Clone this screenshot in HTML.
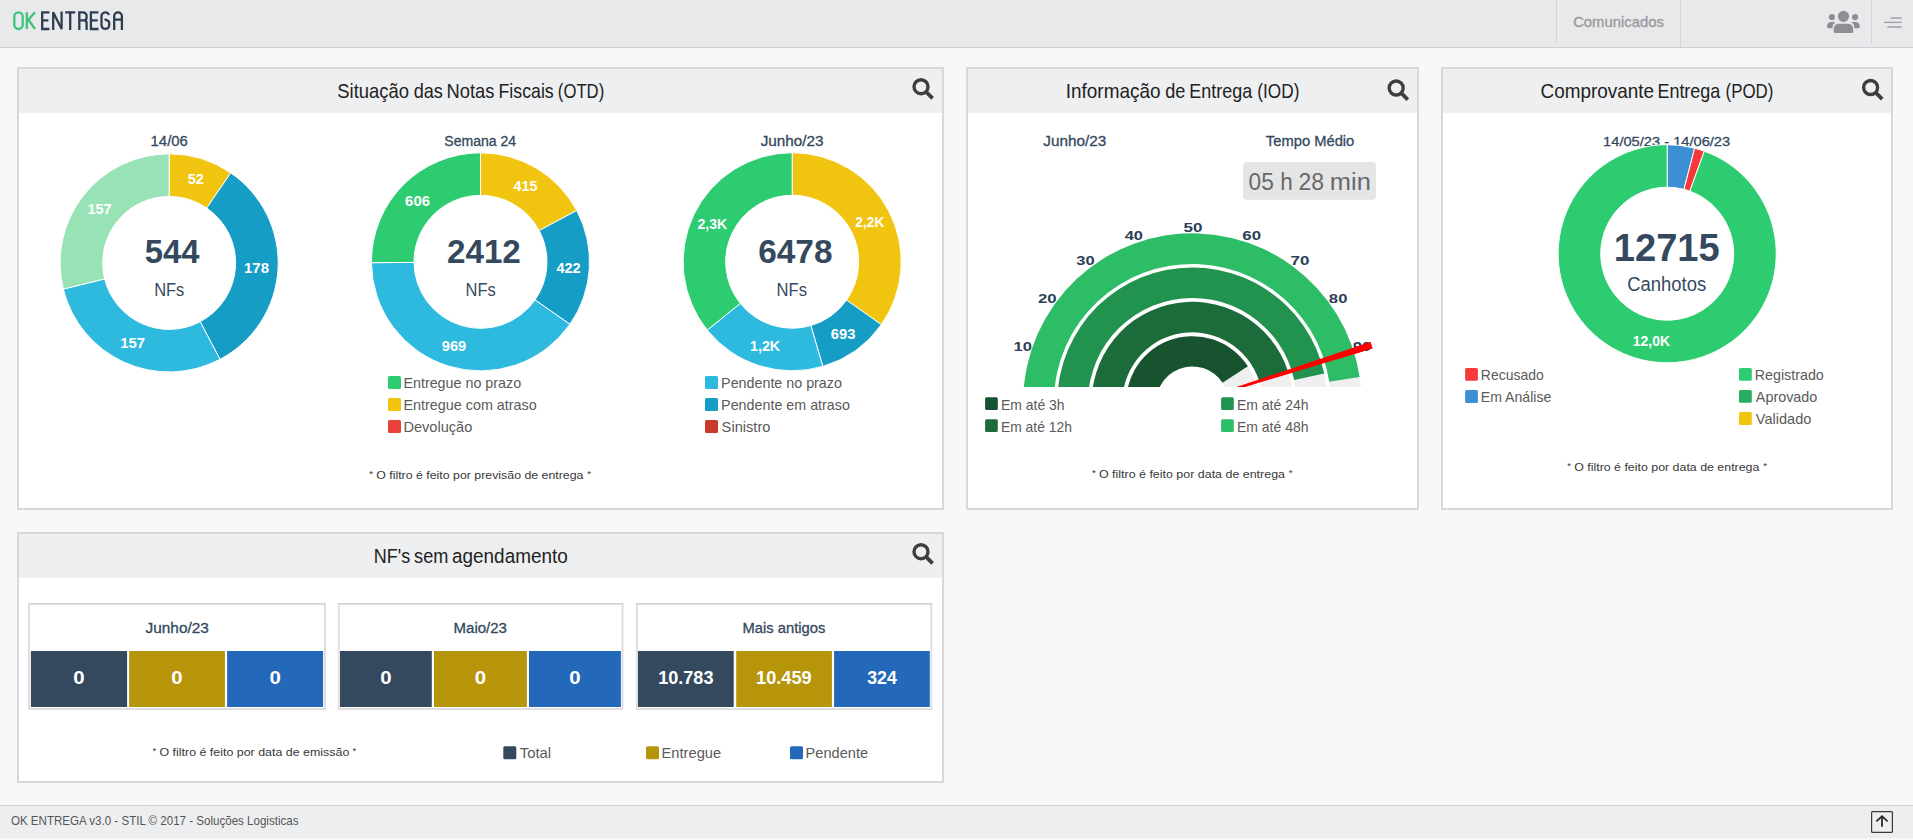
<!DOCTYPE html><html><head><meta charset="utf-8"><style>html,body{margin:0;padding:0;width:1913px;height:840px;overflow:hidden;background:#f7f8fa} svg{position:absolute;left:0;top:0;display:block} text{font-family:"Liberation Sans",sans-serif}</style></head><body>
<svg width="1913" height="840" viewBox="0 0 1913 840">
<rect x="0" y="0" width="1913" height="840" fill="#f7f8fa"/>
<rect x="0" y="0" width="1913" height="47" fill="#e8e9eb"/>
<rect x="0" y="47" width="1913" height="1" fill="#cfd0d3"/>
<rect x="1556" y="0" width="1" height="44" fill="#d3d4d7"/>
<rect x="1680" y="0" width="1" height="47" fill="#d3d4d7"/>
<rect x="1871" y="0" width="1" height="44" fill="#d3d4d7"/>
<path d="M14.3,16.5 A4.2,4.2 0 0 1 22.7,16.5 L22.7,24.8 A4.2,4.2 0 0 1 14.3,24.8 Z" fill="none" stroke="#3ec37a" stroke-width="2.3" stroke-linecap="round" stroke-linejoin="round"/>
<path d="M26.8,12.3 L26.8,29.0" fill="none" stroke="#3ec37a" stroke-width="2.3" stroke-linecap="butt" stroke-linejoin="round"/>
<path d="M34.9,12.3 L27.2,21.2 M28.6,19.9 L35.0,29.0" fill="none" stroke="#3ec37a" stroke-width="2.3" stroke-linecap="butt" stroke-linejoin="round"/>
<path d="M49.4,12.3 L42.2,12.3 L42.2,29.0 L49.4,29.0 M42.2,20.3 L48.4,20.3" fill="none" stroke="#2e3e50" stroke-width="2.3" stroke-linecap="butt" stroke-linejoin="miter"/>
<path d="M53.2,29.9 L53.2,12.3 L61.6,29.0 L61.6,11.4" fill="none" stroke="#2e3e50" stroke-width="2.3" stroke-linecap="butt" stroke-linejoin="miter"/>
<path d="M65.2,12.3 L75.3,12.3 M70.2,12.3 L70.2,29.9" fill="none" stroke="#2e3e50" stroke-width="2.3" stroke-linecap="butt" stroke-linejoin="miter"/>
<path d="M79.3,29.9 L79.3,12.3 L83.0,12.3 A3.6,3.6 0 0 1 86.6,15.9 L86.6,17.6 Q86.6,20.3 84.0,20.3 L79.3,20.3 M84.0,20.3 Q86.6,20.3 86.6,23.0 L86.6,29.9" fill="none" stroke="#2e3e50" stroke-width="2.3" stroke-linecap="butt" stroke-linejoin="miter"/>
<path d="M98.5,12.3 L90.9,12.3 L90.9,29.0 L98.5,29.0 M90.9,20.3 L97.8,20.3" fill="none" stroke="#2e3e50" stroke-width="2.3" stroke-linecap="butt" stroke-linejoin="miter"/>
<path d="M108.6,14.15 A3.85,3.85 0 0 0 101.5,16.2 L101.5,25.1 A3.85,3.85 0 0 0 109.2,25.1 L109.2,22.8 Q109.2,20.6 105.4,19.6" fill="none" stroke="#2e3e50" stroke-width="2.3" stroke-linecap="round" stroke-linejoin="round"/>
<path d="M114.2,29.9 L114.2,16.2 A3.85,3.85 0 0 1 121.9,16.2 L121.9,29.9 M114.2,19.7 L121.9,19.7" fill="none" stroke="#2e3e50" stroke-width="2.3" stroke-linecap="butt" stroke-linejoin="miter"/>
<text x="1573.16" y="27.10" font-size="15.42" fill="#9a9a9c" stroke="#9a9a9c" stroke-width="0.35" textLength="90.65" lengthAdjust="spacingAndGlyphs">Comunicados</text>
<circle cx="1843.5" cy="16.3" r="5.6" fill="#8e8e93"/>
<circle cx="1831.9" cy="17.1" r="3.1" fill="#8e8e93"/>
<circle cx="1855.1" cy="17.1" r="3.1" fill="#8e8e93"/>
<path d="M1833.6,31.5 L1833.6,29.5 Q1833.6,23.8 1839.5,23.8 L1847.3,23.8 Q1853.2,23.8 1853.2,29.5 L1853.2,31.5 Q1853.2,33 1851.7,33 L1835.1,33 Q1833.6,33 1833.6,31.5 Z" fill="#8e8e93"/>
<path d="M1827,27 Q1827,22.1 1831.5,22.1 L1835.4,22.1 Q1832.6,24.2 1832.4,28.3 L1828.5,28.3 Q1827,28.3 1827,27 Z" fill="#8e8e93"/>
<path d="M1859.8,27 Q1859.8,22.1 1855.3,22.1 L1851.4,22.1 Q1854.2,24.2 1854.4,28.3 L1858.3,28.3 Q1859.8,28.3 1859.8,27 Z" fill="#8e8e93"/>
<rect x="1890.7" y="17.3" width="11" height="1.5" fill="#a4a4a8"/>
<rect x="1883.8" y="21.7" width="17.9" height="1.4" fill="#a4a4a8"/>
<rect x="1887.4" y="26.2" width="14.3" height="1.6" fill="#a4a4a8"/>
<rect x="17" y="67" width="927" height="443" fill="#d8d8da"/>
<rect x="19" y="69" width="923" height="439" fill="#fff"/>
<rect x="19" y="69" width="923" height="44" fill="#eeeff1"/>
<rect x="966" y="67" width="453" height="443" fill="#d8d8da"/>
<rect x="968" y="69" width="449" height="439" fill="#fff"/>
<rect x="968" y="69" width="449" height="44" fill="#eeeff1"/>
<rect x="1441" y="67" width="452" height="443" fill="#d8d8da"/>
<rect x="1443" y="69" width="448" height="439" fill="#fff"/>
<rect x="1443" y="69" width="448" height="44" fill="#eeeff1"/>
<rect x="17" y="532" width="927" height="251" fill="#d8d8da"/>
<rect x="19" y="534" width="923" height="247" fill="#fff"/>
<rect x="19" y="534" width="923" height="44" fill="#eeeff1"/>
<circle cx="921" cy="86.7" r="7.0" fill="none" stroke="#3e3e40" stroke-width="3.35"/>
<line x1="925.6" y1="91.3" x2="932.6" y2="98.3" stroke="#3e3e40" stroke-width="3.8"/>
<circle cx="1396.2" cy="88" r="7.0" fill="none" stroke="#3e3e40" stroke-width="3.35"/>
<line x1="1400.8" y1="92.6" x2="1407.8" y2="99.6" stroke="#3e3e40" stroke-width="3.8"/>
<circle cx="1870.6" cy="87.5" r="7.0" fill="none" stroke="#3e3e40" stroke-width="3.35"/>
<line x1="1875.1999999999998" y1="92.1" x2="1882.1999999999998" y2="99.1" stroke="#3e3e40" stroke-width="3.8"/>
<circle cx="921" cy="551.7" r="7.0" fill="none" stroke="#3e3e40" stroke-width="3.35"/>
<line x1="925.6" y1="556.3000000000001" x2="932.6" y2="563.3000000000001" stroke="#3e3e40" stroke-width="3.8"/>
<text x="337.27" y="98.20" font-size="19.35" fill="#222" textLength="71.70" lengthAdjust="spacingAndGlyphs">Situação</text>
<text x="413.63" y="98.20" font-size="19.35" fill="#222" textLength="29.20" lengthAdjust="spacingAndGlyphs">das</text>
<text x="446.59" y="98.20" font-size="19.35" fill="#222" textLength="47.85" lengthAdjust="spacingAndGlyphs">Notas</text>
<text x="498.54" y="98.20" font-size="19.35" fill="#222" textLength="55.16" lengthAdjust="spacingAndGlyphs">Fiscais</text>
<text x="557.86" y="98.20" font-size="19.35" fill="#222" textLength="46.33" lengthAdjust="spacingAndGlyphs">(OTD)</text>
<text x="1065.75" y="98.00" font-size="19.35" fill="#222" textLength="94.71" lengthAdjust="spacingAndGlyphs">Informação</text>
<text x="1165.23" y="98.00" font-size="19.35" fill="#222" textLength="20.18" lengthAdjust="spacingAndGlyphs">de</text>
<text x="1189.32" y="98.00" font-size="19.35" fill="#222" textLength="62.84" lengthAdjust="spacingAndGlyphs">Entrega</text>
<text x="1257.33" y="98.00" font-size="19.35" fill="#222" textLength="42.03" lengthAdjust="spacingAndGlyphs">(IOD)</text>
<text x="1540.55" y="97.80" font-size="19.35" fill="#222" textLength="113.56" lengthAdjust="spacingAndGlyphs">Comprovante</text>
<text x="1657.42" y="97.80" font-size="19.35" fill="#222" textLength="62.94" lengthAdjust="spacingAndGlyphs">Entrega</text>
<text x="1725.55" y="97.80" font-size="19.35" fill="#222" textLength="47.77" lengthAdjust="spacingAndGlyphs">(POD)</text>
<text x="373.82" y="563.20" font-size="19.49" fill="#222" textLength="36.39" lengthAdjust="spacingAndGlyphs">NF's</text>
<text x="414.10" y="563.20" font-size="19.49" fill="#222" textLength="34.31" lengthAdjust="spacingAndGlyphs">sem</text>
<text x="452.00" y="563.20" font-size="19.49" fill="#222" textLength="115.79" lengthAdjust="spacingAndGlyphs">agendamento</text>
<text x="150.58" y="145.90" font-size="14.84" fill="#34495e" stroke="#34495e" stroke-width="0.3" textLength="37.25" lengthAdjust="spacingAndGlyphs">14/06</text>
<text x="444.27" y="145.90" font-size="14.55" fill="#34495e" stroke="#34495e" stroke-width="0.3" textLength="71.85" lengthAdjust="spacingAndGlyphs">Semana 24</text>
<text x="760.67" y="145.90" font-size="14.55" fill="#34495e" stroke="#34495e" stroke-width="0.3" textLength="62.92" lengthAdjust="spacingAndGlyphs">Junho/23</text>
<path d="M169.15,153.85 A109.05,109.05 0 0 1 230.78,172.93 L206.73,208.04 A66.5,66.5 0 0 0 169.15,196.40 Z" fill="#f1c40f" stroke="#fff" stroke-width="1" stroke-linejoin="round"/>
<path d="M230.78,172.93 A109.05,109.05 0 0 1 220.01,359.36 L200.16,321.72 A66.5,66.5 0 0 0 206.73,208.04 Z" fill="#169dc6" stroke="#fff" stroke-width="1" stroke-linejoin="round"/>
<path d="M220.01,359.36 A109.05,109.05 0 0 1 63.29,289.10 L104.60,278.88 A66.5,66.5 0 0 0 200.16,321.72 Z" fill="#2eb9df" stroke="#fff" stroke-width="1" stroke-linejoin="round"/>
<path d="M63.29,289.10 A109.05,109.05 0 0 1 169.15,153.85 L169.15,196.40 A66.5,66.5 0 0 0 104.60,278.88 Z" fill="#98e3b5" stroke="#fff" stroke-width="1" stroke-linejoin="round"/>
<path d="M480.50,152.80 A109.05,109.05 0 0 1 576.73,210.55 L539.18,230.57 A66.5,66.5 0 0 0 480.50,195.35 Z" fill="#f1c40f" stroke="#fff" stroke-width="1" stroke-linejoin="round"/>
<path d="M576.73,210.55 A109.05,109.05 0 0 1 569.90,324.29 L535.02,299.93 A66.5,66.5 0 0 0 539.18,230.57 Z" fill="#169dc6" stroke="#fff" stroke-width="1" stroke-linejoin="round"/>
<path d="M569.90,324.29 A109.05,109.05 0 0 1 371.45,262.69 L414.00,262.36 A66.5,66.5 0 0 0 535.02,299.93 Z" fill="#2eb9df" stroke="#fff" stroke-width="1" stroke-linejoin="round"/>
<path d="M371.45,262.69 A109.05,109.05 0 0 1 480.50,152.80 L480.50,195.35 A66.5,66.5 0 0 0 414.00,262.36 Z" fill="#2ecc71" stroke="#fff" stroke-width="1" stroke-linejoin="round"/>
<path d="M792.20,152.70 A109.05,109.05 0 0 1 881.31,324.61 L846.54,300.08 A66.5,66.5 0 0 0 792.20,195.25 Z" fill="#f1c40f" stroke="#fff" stroke-width="1" stroke-linejoin="round"/>
<path d="M881.31,324.61 A109.05,109.05 0 0 1 822.81,366.42 L810.86,325.58 A66.5,66.5 0 0 0 846.54,300.08 Z" fill="#169dc6" stroke="#fff" stroke-width="1" stroke-linejoin="round"/>
<path d="M822.81,366.42 A109.05,109.05 0 0 1 707.21,330.08 L740.37,303.42 A66.5,66.5 0 0 0 810.86,325.58 Z" fill="#2eb9df" stroke="#fff" stroke-width="1" stroke-linejoin="round"/>
<path d="M707.21,330.08 A109.05,109.05 0 0 1 792.20,152.70 L792.20,195.25 A66.5,66.5 0 0 0 740.37,303.42 Z" fill="#2ecc71" stroke="#fff" stroke-width="1" stroke-linejoin="round"/>
<text x="187.77" y="183.90" font-size="14.55" font-weight="bold" fill="#ffffff" textLength="16.00" lengthAdjust="spacingAndGlyphs">52</text>
<text x="244.07" y="273.30" font-size="14.55" font-weight="bold" fill="#ffffff" textLength="24.90" lengthAdjust="spacingAndGlyphs">178</text>
<text x="120.17" y="348.20" font-size="14.55" font-weight="bold" fill="#ffffff" textLength="24.77" lengthAdjust="spacingAndGlyphs">157</text>
<text x="87.40" y="214.20" font-size="14.55" font-weight="bold" fill="#ffffff" textLength="24.03" lengthAdjust="spacingAndGlyphs">157</text>
<text x="513.48" y="191.40" font-size="14.55" font-weight="bold" fill="#ffffff" textLength="24.03" lengthAdjust="spacingAndGlyphs">415</text>
<text x="405.14" y="206.30" font-size="14.55" font-weight="bold" fill="#ffffff" textLength="24.79" lengthAdjust="spacingAndGlyphs">606</text>
<text x="556.38" y="273.10" font-size="14.55" font-weight="bold" fill="#ffffff" textLength="24.18" lengthAdjust="spacingAndGlyphs">422</text>
<text x="441.79" y="350.90" font-size="14.55" font-weight="bold" fill="#ffffff" textLength="24.44" lengthAdjust="spacingAndGlyphs">969</text>
<text x="855.22" y="227.40" font-size="14.55" font-weight="bold" fill="#ffffff" textLength="29.22" lengthAdjust="spacingAndGlyphs">2,2K</text>
<text x="697.51" y="228.80" font-size="14.55" font-weight="bold" fill="#ffffff" textLength="29.73" lengthAdjust="spacingAndGlyphs">2,3K</text>
<text x="830.85" y="339.10" font-size="14.55" font-weight="bold" fill="#ffffff" textLength="24.58" lengthAdjust="spacingAndGlyphs">693</text>
<text x="750.01" y="350.60" font-size="14.55" font-weight="bold" fill="#ffffff" textLength="30.13" lengthAdjust="spacingAndGlyphs">1,2K</text>
<text x="144.72" y="263.10" font-size="33.89" font-weight="bold" fill="#34495e" textLength="54.78" lengthAdjust="spacingAndGlyphs">544</text>
<text x="446.94" y="263.10" font-size="33.89" font-weight="bold" fill="#34495e" textLength="73.88" lengthAdjust="spacingAndGlyphs">2412</text>
<text x="758.25" y="263.10" font-size="33.89" font-weight="bold" fill="#34495e" textLength="74.23" lengthAdjust="spacingAndGlyphs">6478</text>
<text x="154.14" y="295.70" font-size="18.04" fill="#34495e" textLength="30.25" lengthAdjust="spacingAndGlyphs">NFs</text>
<text x="465.54" y="295.70" font-size="18.04" fill="#34495e" textLength="30.25" lengthAdjust="spacingAndGlyphs">NFs</text>
<text x="776.53" y="295.70" font-size="18.04" fill="#34495e" textLength="30.46" lengthAdjust="spacingAndGlyphs">NFs</text>
<rect x="388" y="376" width="13" height="13" rx="1.5" fill="#2ecc71"/>
<text x="403.42" y="387.90" font-size="14.40" fill="#5a5a5a" textLength="117.76" lengthAdjust="spacingAndGlyphs">Entregue no prazo</text>
<rect x="388" y="398" width="13" height="13" rx="1.5" fill="#f1c40f"/>
<text x="403.41" y="409.90" font-size="14.40" fill="#5a5a5a" textLength="133.37" lengthAdjust="spacingAndGlyphs">Entregue com atraso</text>
<rect x="388" y="420" width="13" height="13" rx="1.5" fill="#e8403a"/>
<text x="403.40" y="431.90" font-size="14.40" fill="#5a5a5a" textLength="68.89" lengthAdjust="spacingAndGlyphs">Devolução</text>
<rect x="705" y="376" width="13" height="13" rx="1.5" fill="#2eb9df"/>
<text x="721.12" y="387.90" font-size="14.40" fill="#5a5a5a" textLength="120.77" lengthAdjust="spacingAndGlyphs">Pendente no prazo</text>
<rect x="705" y="398" width="13" height="13" rx="1.5" fill="#169dc6"/>
<text x="721.12" y="409.90" font-size="14.40" fill="#5a5a5a" textLength="128.77" lengthAdjust="spacingAndGlyphs">Pendente em atraso</text>
<rect x="705" y="420" width="13" height="13" rx="1.5" fill="#c9392c"/>
<text x="721.64" y="431.90" font-size="14.40" fill="#5a5a5a" textLength="48.77" lengthAdjust="spacingAndGlyphs">Sinistro</text>
<text x="376.21" y="478.80" font-size="11.78" fill="#383838" textLength="207.26" lengthAdjust="spacingAndGlyphs">O filtro é feito por previsão de entrega</text>
<text x="369.23" y="476.99" font-size="9.14" fill="#383838" textLength="3.73" lengthAdjust="spacingAndGlyphs">*</text>
<text x="587.33" y="476.99" font-size="9.14" fill="#383838" textLength="3.73" lengthAdjust="spacingAndGlyphs">*</text>
<text x="1043.27" y="145.70" font-size="14.55" fill="#34495e" stroke="#34495e" stroke-width="0.3" textLength="63.02" lengthAdjust="spacingAndGlyphs">Junho/23</text>
<text x="1265.87" y="145.70" font-size="14.55" fill="#34495e" stroke="#34495e" stroke-width="0.3" textLength="88.43" lengthAdjust="spacingAndGlyphs">Tempo Médio</text>
<rect x="1243" y="162" width="133" height="37.7" rx="3.5" fill="#e5e5e6"/>
<text x="1248.59" y="190.00" font-size="24.58" fill="#68686a" textLength="25.27" lengthAdjust="spacingAndGlyphs">05</text>
<text x="1280.13" y="190.00" font-size="24.58" fill="#68686a" textLength="12.51" lengthAdjust="spacingAndGlyphs">h</text>
<text x="1298.55" y="190.00" font-size="24.58" fill="#68686a" textLength="25.58" lengthAdjust="spacingAndGlyphs">28</text>
<text x="1329.78" y="190.00" font-size="24.58" fill="#68686a" textLength="41.05" lengthAdjust="spacingAndGlyphs">min</text>
<clipPath id="gclip"><rect x="900" y="100" width="600" height="287"/></clipPath>
<g clip-path="url(#gclip)">
<path d="M1025.72,431.78 A169.2,169.2 0 1 1 1358.98,431.78 L1328.75,426.45 A138.5,138.5 0 1 0 1055.95,426.45 Z" fill="#efefef"/>
<path d="M1059.40,425.84 A135.0,135.0 0 1 1 1325.30,425.84 L1295.07,420.51 A104.3,104.3 0 1 0 1089.63,420.51 Z" fill="#efefef"/>
<path d="M1093.28,419.87 A100.6,100.6 0 1 1 1291.42,419.87 L1261.39,414.57 A70.1,70.1 0 1 0 1123.31,414.57 Z" fill="#efefef"/>
<path d="M1127.16,413.90 A66.2,66.2 0 1 1 1257.54,413.90 L1227.80,408.65 A36.0,36.0 0 1 0 1156.90,408.65 Z" fill="#efefef"/>
<path d="M1025.72,431.78 A169.2,169.2 0 1 1 1359.65,377.10 L1329.29,381.69 A138.5,138.5 0 1 0 1055.95,426.45 Z" fill="#2ebd67"/>
<path d="M1059.40,425.84 A135.0,135.0 0 0 1 1324.20,373.41 L1294.22,380.00 A104.3,104.3 0 0 0 1089.63,420.51 Z" fill="#22934f"/>
<path d="M1093.28,419.87 A100.6,100.6 0 0 1 1288.19,371.81 L1259.13,381.09 A70.1,70.1 0 0 0 1123.31,414.57 Z" fill="#1c6b3a"/>
<path d="M1127.16,413.90 A66.2,66.2 0 0 1 1247.87,366.34 L1222.54,382.79 A36.0,36.0 0 0 0 1156.90,408.65 Z" fill="#17532e"/>
<path d="M1192.50,402.88 L1372.48,348.48 L1370.42,342.00 L1192.20,401.92 Z" fill="#ff0000"/>
</g>
<text x="1013.46" y="350.80" font-size="12.36" font-weight="bold" fill="#2c3e58" textLength="18.44" lengthAdjust="spacingAndGlyphs">10</text>
<text x="1038.01" y="303.00" font-size="12.36" font-weight="bold" fill="#2c3e58" textLength="18.59" lengthAdjust="spacingAndGlyphs">20</text>
<text x="1076.23" y="265.00" font-size="12.36" font-weight="bold" fill="#2c3e58" textLength="18.37" lengthAdjust="spacingAndGlyphs">30</text>
<text x="1124.65" y="240.00" font-size="12.36" font-weight="bold" fill="#2c3e58" textLength="18.24" lengthAdjust="spacingAndGlyphs">40</text>
<text x="1183.49" y="231.90" font-size="12.36" font-weight="bold" fill="#2c3e58" textLength="18.93" lengthAdjust="spacingAndGlyphs">50</text>
<text x="1242.37" y="240.00" font-size="12.36" font-weight="bold" fill="#2c3e58" textLength="18.75" lengthAdjust="spacingAndGlyphs">60</text>
<text x="1290.48" y="265.00" font-size="12.36" font-weight="bold" fill="#2c3e58" textLength="18.84" lengthAdjust="spacingAndGlyphs">70</text>
<text x="1328.86" y="303.00" font-size="12.36" font-weight="bold" fill="#2c3e58" textLength="18.55" lengthAdjust="spacingAndGlyphs">80</text>
<text x="1352.94" y="350.80" font-size="12.36" font-weight="bold" fill="#2c3e58" textLength="17.95" lengthAdjust="spacingAndGlyphs">90</text>
<path d="M1336.10,359.46 L1372.48,348.48 L1370.42,342.00 L1334.40,354.13 Z" fill="#ff0000"/>
<rect x="985.1" y="397.3" width="12.7" height="12.7" rx="1.5" fill="#17532e"/>
<text x="1000.95" y="409.80" font-size="14.40" fill="#5a5a5a" textLength="63.63" lengthAdjust="spacingAndGlyphs">Em até 3h</text>
<rect x="985.1" y="419.3" width="12.7" height="12.7" rx="1.5" fill="#1c6b3a"/>
<text x="1000.96" y="431.80" font-size="14.40" fill="#5a5a5a" textLength="70.94" lengthAdjust="spacingAndGlyphs">Em até 12h</text>
<rect x="1221.1" y="397.3" width="12.7" height="12.7" rx="1.5" fill="#22934f"/>
<text x="1236.95" y="409.80" font-size="14.40" fill="#5a5a5a" textLength="71.56" lengthAdjust="spacingAndGlyphs">Em até 24h</text>
<rect x="1221.1" y="419.3" width="12.7" height="12.7" rx="1.5" fill="#2ebd67"/>
<text x="1236.95" y="431.80" font-size="14.40" fill="#5a5a5a" textLength="71.56" lengthAdjust="spacingAndGlyphs">Em até 48h</text>
<text x="1098.91" y="477.80" font-size="11.78" fill="#383838" textLength="186.08" lengthAdjust="spacingAndGlyphs">O filtro é feito por data de entrega</text>
<text x="1091.93" y="475.99" font-size="9.14" fill="#383838" textLength="3.73" lengthAdjust="spacingAndGlyphs">*</text>
<text x="1288.83" y="475.99" font-size="9.14" fill="#383838" textLength="3.73" lengthAdjust="spacingAndGlyphs">*</text>
<text x="1603.10" y="145.50" font-size="13.67" fill="#34495e" stroke="#34495e" stroke-width="0.3" textLength="127.05" lengthAdjust="spacingAndGlyphs">14/05/23 - 14/06/23</text>
<path d="M1667.20,144.65 A109.05,109.05 0 0 1 1694.69,148.17 L1683.96,189.35 A66.5,66.5 0 0 0 1667.20,187.20 Z" fill="#3d8fd4" stroke="#fff" stroke-width="1" stroke-linejoin="round"/>
<path d="M1694.69,148.17 A109.05,109.05 0 0 1 1704.32,151.16 L1689.84,191.17 A66.5,66.5 0 0 0 1683.96,189.35 Z" fill="#f5393a" stroke="#fff" stroke-width="1" stroke-linejoin="round"/>
<path d="M1704.32,151.16 A109.05,109.05 0 1 1 1667.20,144.65 L1667.20,187.20 A66.5,66.5 0 1 0 1689.84,191.17 Z" fill="#2ecc71" stroke="#fff" stroke-width="1" stroke-linejoin="round"/>
<text x="1613.82" y="261.00" font-size="38.84" font-weight="bold" fill="#34495e" textLength="105.86" lengthAdjust="spacingAndGlyphs">12715</text>
<text x="1627.18" y="291.00" font-size="19.49" fill="#34495e" textLength="78.98" lengthAdjust="spacingAndGlyphs">Canhotos</text>
<text x="1632.83" y="346.00" font-size="14.55" font-weight="bold" fill="#ffffff" textLength="37.29" lengthAdjust="spacingAndGlyphs">12,0K</text>
<rect x="1465.1" y="368" width="12.8" height="12.8" rx="1.5" fill="#f73b3b"/>
<text x="1480.85" y="379.90" font-size="14.40" fill="#5a5a5a" textLength="62.82" lengthAdjust="spacingAndGlyphs">Recusado</text>
<rect x="1465.1" y="390.1" width="12.8" height="12.8" rx="1.5" fill="#3d8fd4"/>
<text x="1480.84" y="402.00" font-size="14.40" fill="#5a5a5a" textLength="70.56" lengthAdjust="spacingAndGlyphs">Em Análise</text>
<rect x="1739" y="367.9" width="12.8" height="12.8" rx="1.5" fill="#2ecc71"/>
<text x="1754.72" y="380.00" font-size="14.40" fill="#5a5a5a" textLength="69.07" lengthAdjust="spacingAndGlyphs">Registrado</text>
<rect x="1739" y="390" width="12.8" height="12.8" rx="1.5" fill="#27ae60"/>
<text x="1755.86" y="401.70" font-size="14.40" fill="#5a5a5a" textLength="61.42" lengthAdjust="spacingAndGlyphs">Aprovado</text>
<rect x="1739" y="412.1" width="12.8" height="12.8" rx="1.5" fill="#f1c40f"/>
<text x="1755.83" y="423.75" font-size="14.40" fill="#5a5a5a" textLength="55.56" lengthAdjust="spacingAndGlyphs">Validado</text>
<text x="1574.21" y="470.90" font-size="11.78" fill="#383838" textLength="185.18" lengthAdjust="spacingAndGlyphs">O filtro é feito por data de entrega</text>
<text x="1567.23" y="469.09" font-size="9.14" fill="#383838" textLength="3.73" lengthAdjust="spacingAndGlyphs">*</text>
<text x="1763.23" y="469.09" font-size="9.14" fill="#383838" textLength="3.73" lengthAdjust="spacingAndGlyphs">*</text>
<rect x="28" y="603" width="298" height="107" fill="#dfdfe0"/>
<rect x="28" y="603" width="298" height="1" fill="#d3d3d5"/>
<rect x="30" y="605" width="294" height="103" fill="#fff"/>
<rect x="30.9" y="651" width="96.2" height="56" fill="#34495e"/>
<text x="73.33" y="684.40" font-size="17.78" font-weight="bold" fill="#ffffff" textLength="11.36" lengthAdjust="spacingAndGlyphs">0</text>
<rect x="129.1" y="651" width="95.8" height="56" fill="#b7950b"/>
<text x="171.33" y="684.40" font-size="17.78" font-weight="bold" fill="#ffffff" textLength="11.36" lengthAdjust="spacingAndGlyphs">0</text>
<rect x="227.1" y="651" width="96.0" height="56" fill="#2468b9"/>
<text x="269.43" y="684.40" font-size="17.78" font-weight="bold" fill="#ffffff" textLength="11.36" lengthAdjust="spacingAndGlyphs">0</text>
<text x="145.57" y="633.10" font-size="14.55" fill="#34495e" stroke="#34495e" stroke-width="0.3" textLength="63.32" lengthAdjust="spacingAndGlyphs">Junho/23</text>
<rect x="337.8" y="603" width="285.7" height="107" fill="#dfdfe0"/>
<rect x="337.8" y="603" width="285.7" height="1" fill="#d3d3d5"/>
<rect x="339.8" y="605" width="281.7" height="103" fill="#fff"/>
<rect x="340.0" y="651" width="91.8" height="56" fill="#34495e"/>
<text x="380.23" y="684.40" font-size="17.78" font-weight="bold" fill="#ffffff" textLength="11.36" lengthAdjust="spacingAndGlyphs">0</text>
<rect x="434.0" y="651" width="92.9" height="56" fill="#b7950b"/>
<text x="474.78" y="684.40" font-size="17.78" font-weight="bold" fill="#ffffff" textLength="11.36" lengthAdjust="spacingAndGlyphs">0</text>
<rect x="529.0" y="651" width="91.9" height="56" fill="#2468b9"/>
<text x="569.28" y="684.40" font-size="17.78" font-weight="bold" fill="#ffffff" textLength="11.36" lengthAdjust="spacingAndGlyphs">0</text>
<text x="453.56" y="633.10" font-size="14.55" fill="#34495e" stroke="#34495e" stroke-width="0.3" textLength="53.38" lengthAdjust="spacingAndGlyphs">Maio/23</text>
<rect x="635.9" y="603" width="296.4" height="107" fill="#dfdfe0"/>
<rect x="635.9" y="603" width="296.4" height="1" fill="#d3d3d5"/>
<rect x="637.9" y="605" width="292.4" height="103" fill="#fff"/>
<rect x="638.0" y="651" width="95.7" height="56" fill="#34495e"/>
<text x="658.17" y="684.40" font-size="17.78" font-weight="bold" fill="#ffffff" textLength="55.28" lengthAdjust="spacingAndGlyphs">10.783</text>
<rect x="736.2" y="651" width="95.7" height="56" fill="#b7950b"/>
<text x="756.06" y="684.40" font-size="17.78" font-weight="bold" fill="#ffffff" textLength="55.59" lengthAdjust="spacingAndGlyphs">10.459</text>
<rect x="834.1" y="651" width="95.7" height="56" fill="#2468b9"/>
<text x="867.20" y="684.40" font-size="17.78" font-weight="bold" fill="#ffffff" textLength="29.71" lengthAdjust="spacingAndGlyphs">324</text>
<text x="742.58" y="633.10" font-size="14.55" fill="#34495e" stroke="#34495e" stroke-width="0.3" textLength="82.82" lengthAdjust="spacingAndGlyphs">Mais antigos</text>
<text x="159.51" y="755.90" font-size="11.78" fill="#383838" textLength="189.80" lengthAdjust="spacingAndGlyphs">O filtro é feito por data de emissão</text>
<text x="152.53" y="754.09" font-size="9.14" fill="#383838" textLength="3.73" lengthAdjust="spacingAndGlyphs">*</text>
<text x="352.63" y="754.09" font-size="9.14" fill="#383838" textLength="3.73" lengthAdjust="spacingAndGlyphs">*</text>
<rect x="503.3" y="746.2" width="13" height="13" rx="1.5" fill="#34495e"/>
<text x="519.77" y="757.70" font-size="14.40" fill="#5a5a5a" textLength="31.33" lengthAdjust="spacingAndGlyphs">Total</text>
<rect x="646" y="746.2" width="13" height="13" rx="1.5" fill="#b7950b"/>
<text x="661.59" y="757.70" font-size="14.40" fill="#5a5a5a" textLength="59.55" lengthAdjust="spacingAndGlyphs">Entregue</text>
<rect x="790" y="746.2" width="13" height="13" rx="1.5" fill="#2468b9"/>
<text x="805.59" y="757.70" font-size="14.40" fill="#5a5a5a" textLength="62.55" lengthAdjust="spacingAndGlyphs">Pendente</text>
<rect x="0" y="805" width="1913" height="1" fill="#d2d3d6"/>
<rect x="0" y="806" width="1913" height="32" fill="#edeef0"/>
<text x="10.95" y="825.10" font-size="12.95" fill="#555" textLength="287.56" lengthAdjust="spacingAndGlyphs">OK ENTREGA v3.0 - STIL © 2017 - Soluções Logisticas</text>
<rect x="1871.6" y="811.6" width="20.8" height="20.8" rx="1" fill="none" stroke="#3a3a3c" stroke-width="1.2"/>
<path d="M1882,826.8 L1882,816.8 M1876.4,821.4 L1882,816.2 L1887.6,821.4" fill="none" stroke="#2a2a2c" stroke-width="1.8"/>
</svg></body></html>
